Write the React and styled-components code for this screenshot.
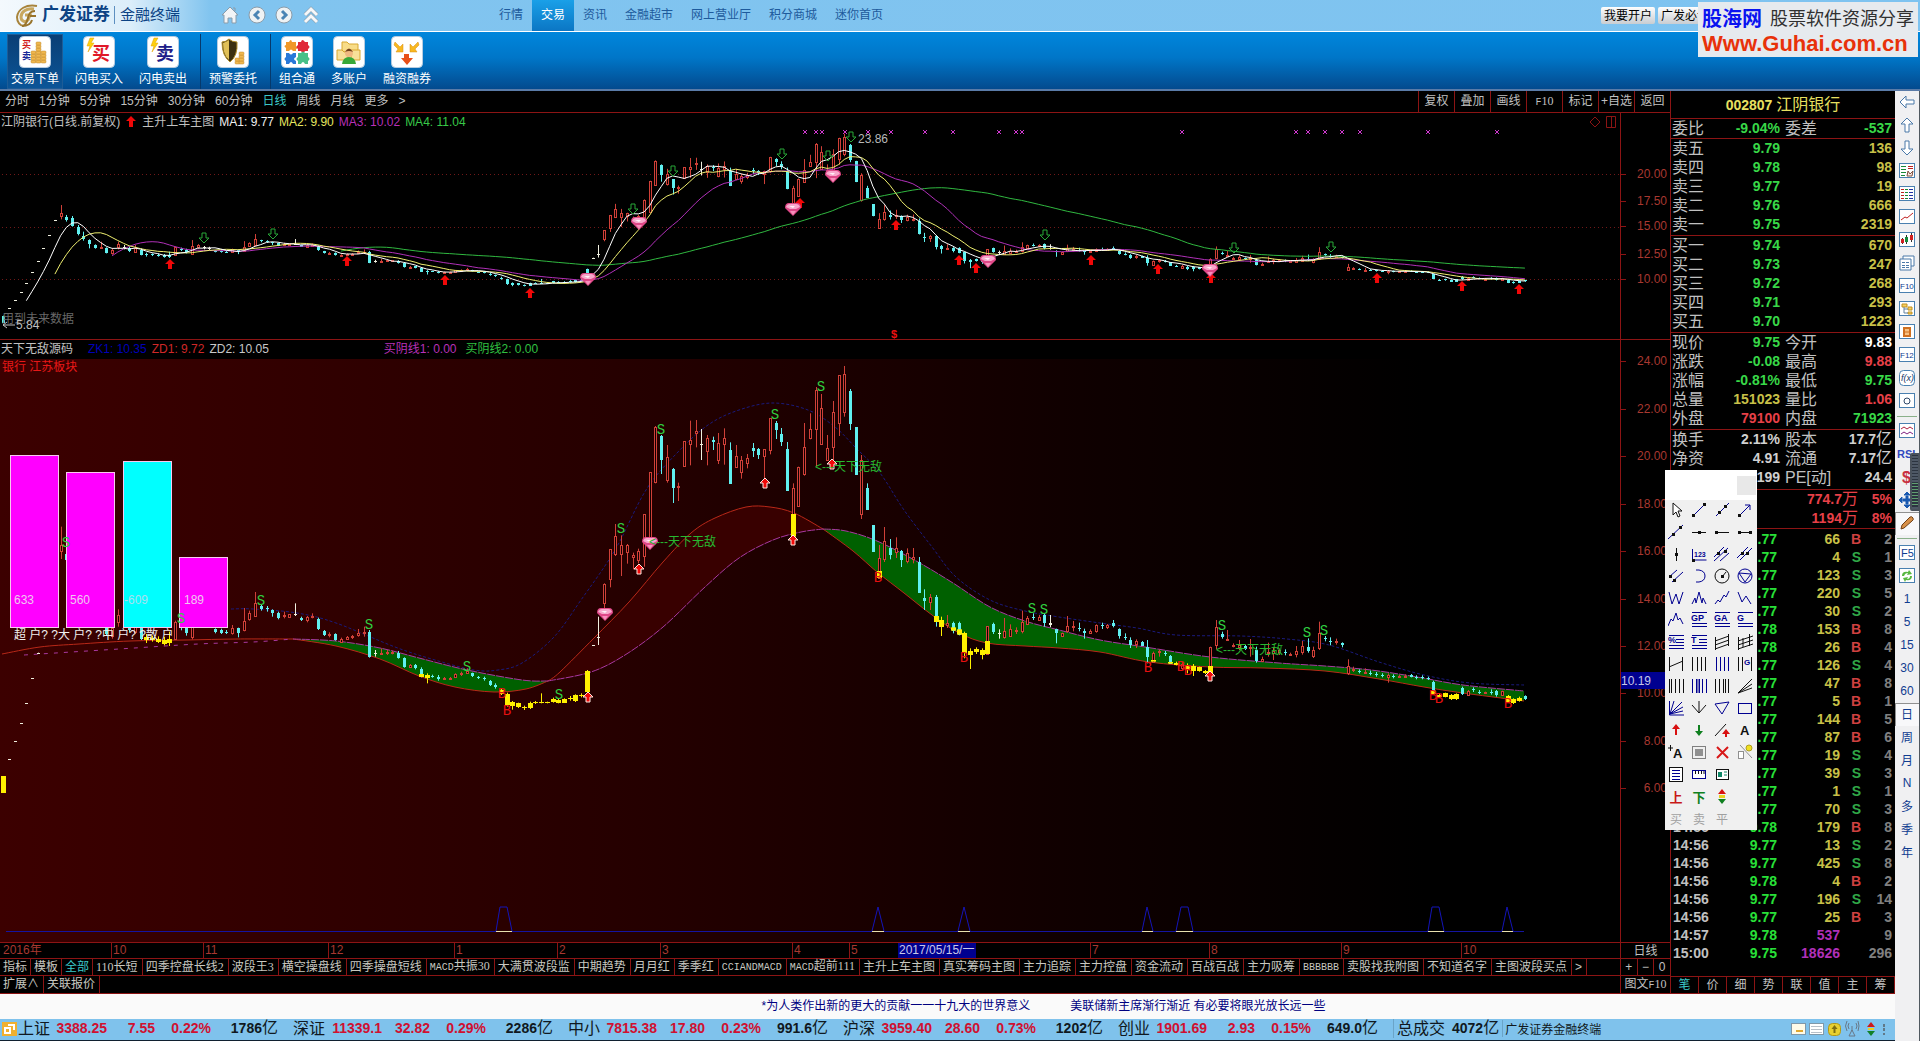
import { useState } from "react";
import styled, { createGlobalStyle, css } from "styled-components";

const GlobalStyle = createGlobalStyle`
  * {
    box-sizing: border-box;
  }
  body {
    margin: 0;
    background: #000;
    font-family: "Liberation Sans", "Noto Sans CJK SC", sans-serif;
    font-size: 12px;
    color: #c0c0c0;
  }
  button {
    font: inherit;
    color: inherit;
    background: none;
    border: 0;
    padding: 0;
    cursor: pointer;
  }
  a {
    color: inherit;
    text-decoration: none;
  }
  svg {
    display: block;
  }
`;

const RED = "#8c1414";
const GREEN = "#30d040";

const Page = styled.div`
  position: relative;
  min-height: 100vh;
  display: flex;
  flex-direction: column;
  overflow: hidden;
`;

/* ---------- title bar ---------- */

const TitleBar = styled.header`
  height: 32px;
  display: flex;
  align-items: center;
  background: linear-gradient(90deg, #f4f9fd 0, #dceefa 130px, #81c4ef 210px, #7ec3f0 100%);
  border-bottom: 1px solid #fff;
`;

const Brand = styled.div`
  width: 221px;
  display: flex;
  align-items: center;
  padding-left: 15px;
  color: #0c4384;
`;

const BrandName = styled.strong`
  font-size: 17px;
  line-height: 20px;
  padding: 0 4px 2px 3px;
`;

const BrandSub = styled.span`
  font-size: 15px;
  line-height: 18px;
  padding-left: 5px;
  margin-bottom: 2px;
  border-left: 1px solid #5d8fc0;
`;

const HistoryButtons = styled.div`
  width: 269px;
  display: flex;
  gap: 9px;
  padding-bottom: 2px;
`;

const Nav = styled.nav`
  display: flex;
  flex: 1;
  height: 31px;
`;

const NavLink = styled.a`
  padding: 0 9px;
  line-height: 31px;
  color: ${(p) => (p.$active ? "#fff" : "#1d5a9c")};
  background: ${(p) => (p.$active ? "linear-gradient(#1aa0e8, #0b76c4)" : "none")};
`;

const AccountButtons = styled.div`
  display: flex;
  gap: 3px;
  padding-right: 208px;
`;

const AccountButton = styled.button`
  height: 17px;
  padding: 0 3px;
  line-height: 16px;
  border-radius: 2px;
  color: #000;
  background: linear-gradient(#fdfdfd, #c9cdd2);
`;

const Watermark = styled.aside`
  position: absolute;
  top: 2px;
  right: 2px;
  width: 220px;
  height: 55px;
  padding: 4px;
  background: #e6eaee;
`;

const WatermarkTop = styled.div`
  display: flex;
  justify-content: space-between;
  align-items: center;
  line-height: 26px;
  strong {
    font-size: 20px;
    color: #0a14f0;
  }
  span {
    font-size: 18px;
    color: #303030;
  }
`;

const WatermarkUrl = styled.a`
  display: block;
  font-size: 22px;
  font-weight: bold;
  line-height: 24px;
  color: #e8320a;
`;

/* ---------- trade toolbar ---------- */

const TradeBar = styled.div`
  height: 59px;
  display: flex;
  padding: 2px 3px 0;
  background: linear-gradient(#0086dc 0, #0076c8 45%, #034a8e 100%);
  border-bottom: 2px solid #5a7ba8;
`;

const TradeGroup = styled.div`
  display: flex;
  gap: 8px;
  padding: 0 9px 0 4px;
  & + & {
    border-left: 1px solid #06396c;
  }
`;

const TradeButton = styled.button`
  display: flex;
  flex-direction: column;
  align-items: center;
  gap: 3px;
  padding: 2px 4px 0;
  line-height: 16px;
  color: #fff;
  ${(p) =>
    p.$active &&
    css`
      background: linear-gradient(#0a3e74, #0b5598);
      box-shadow: inset 0 0 0 1px #1e5c96;
    `}
`;

/* ---------- layout of the work area ---------- */

const Work = styled.div`
  display: flex;
  flex: 1;
`;

const Main = styled.main`
  flex: 1;
  min-width: 0;
  display: flex;
  flex-direction: column;
`;

const Desk = styled.div`
  display: flex;
`;

const Charts = styled.div`
  flex: 1;
  min-width: 0;
`;

const PeriodBar = styled.div`
  height: 22px;
  display: flex;
  justify-content: space-between;
  line-height: 20px;
  border-bottom: 1px solid ${RED};
`;

const Periods = styled.div`
  display: flex;
  align-items: flex-start;
  gap: 10px;
  padding-left: 5px;
`;

const Period = styled.button`
  line-height: 20px;
  color: ${(p) => (p.$active ? "#3cc8c8" : "#c0c0c0")};
`;

const ChartActions = styled.div`
  display: flex;
`;

const ChartAction = styled.button`
  width: 36px;
  padding-bottom: 1px;
  border-left: 1px solid ${RED};
`;

const Pane = styled.section`
  display: flex;
  border-bottom: 1px solid ${RED};
`;

const Plot = styled.div`
  flex: 1;
  min-width: 0;
`;

const Legend = styled.div`
  height: 18px;
  display: flex;
  align-items: center;
  gap: 5px;
  padding-left: 1px;
  line-height: 18px;
`;

const LegendValue = styled.span`
  color: ${(p) => p.$color};
  margin-left: ${(p) => p.$before || 0}px;
`;

const LegendEnd = styled.span`
  display: flex;
  gap: 4px;
  margin-left: auto;
  padding-right: 3px;
`;

const PlotSvg = styled.svg`
  width: 100%;
  height: ${(p) => p.$height}px;
  overflow: visible;
`;

const AxisSvg = styled.svg`
  width: 50px;
  flex: none;
  border-left: 1px solid ${RED};
`;

const FootRow = styled.div`
  display: flex;
  height: ${(p) => p.$height}px;
  border-bottom: 1px solid ${RED};
`;

const FootFill = styled.div`
  flex: 1;
  min-width: 0;
  display: flex;
`;

const FootEnd = styled.div`
  width: 50px;
  display: flex;
  flex: none;
  border-left: 1px solid ${RED};
  button {
    flex: 1;
    line-height: 14px;
  }
  button + button {
    border-left: 1px solid ${RED};
  }
`;

const Tab = styled.button`
  padding: 0 ${(p) => (p.$tight ? 3 : 4)}px 0 3px;
  line-height: 15px;
  white-space: nowrap;
  border-right: 1px solid ${RED};
  color: ${(p) => (p.$active ? "#3cc8c8" : "#c8c8c0")};
`;

const Letters = styled.span`
  font-family: "Liberation Mono", monospace;
  font-size: 10px;
`;

const Digits = styled.span`
  font-family: "Liberation Serif", serif;
`;

/* ---------- quote panel ---------- */

const Quote = styled.aside`
  width: 225px;
  display: flex;
  flex-direction: column;
  border-left: 1px solid ${RED};
`;

const QuoteTitle = styled.h1`
  margin: 0;
  height: 28px;
  font-size: 14px;
  line-height: 28px;
  text-align: center;
  color: #e8e060;
  border-bottom: 1px solid ${RED};
  span {
    font-size: 16px;
    font-weight: normal;
  }
`;

const QuoteBlock = styled.div`
  padding-bottom: ${(p) => p.$pad || 0}px;
  border-bottom: 1px solid ${RED};
`;

const QuoteTable = styled.table`
  width: 100%;
  table-layout: fixed;
  border-collapse: collapse;
  th,
  td {
    padding: 0;
    height: 19px;
    line-height: 19px;
    white-space: nowrap;
  }
  th {
    width: 38px;
    font-size: 16px;
    font-weight: normal;
    text-align: left;
    padding-left: 1px;
  }
  th + td {
    width: 71px;
  }
  th:nth-child(3) {
    width: 40px;
    padding-left: 5px;
  }
  td:last-child {
    width: auto;
    padding-right: 3px;
  }
`;

const Num = styled.td`
  font-size: 14px;
  font-weight: bold;
  text-align: right;
  color: ${(p) => p.$color || "#d0d0d0"};
  span {
    font-size: 16px;
    line-height: 0;
    font-weight: normal;
  }
`;

const FlowTable = styled.table`
  width: 100%;
  table-layout: fixed;
  border-collapse: collapse;
  td {
    padding: 0;
    height: 19px;
    line-height: 19px;
  }
  td:last-child {
    width: 37px;
    padding-right: 3px;
  }
`;

const Ticks = styled.table`
  width: 100%;
  margin-top: 1px;
  table-layout: fixed;
  border-collapse: collapse;
  font-size: 14px;
  font-weight: bold;
  td {
    padding: 0;
    height: 18px;
    line-height: 18px;
    text-align: right;
  }
`;

const TickTime = styled.td`
  && {
    width: 42px;
    padding-left: 2px;
    text-align: left;
  }
`;

const TickCell = styled.td`
  width: ${(p) => p.$width}px;
  color: ${(p) => p.$color};
`;

const TickCount = styled.td`
  && {
    padding-right: 3px;
    color: #808080;
  }
`;

const QuoteTabs = styled.div`
  display: flex;
  height: 18px;
  margin-top: auto;
  border: solid ${RED};
  border-width: 1px 0;
`;

const QuoteTab = styled.button`
  flex: 1;
  line-height: 15px;
  border-right: 1px solid ${RED};
  color: ${(p) => (p.$active ? "#3cc8c8" : "#c0c0c0")};
`;

/* ---------- news and status ---------- */

const News = styled.div`
  height: 25px;
  display: flex;
  justify-content: center;
  gap: 40px;
  padding-left: 192px;
  line-height: 24px;
  color: #000080;
  background: #fafafa;
`;

const Status = styled.footer`
  height: 22px;
  display: flex;
  align-items: center;
  padding: 0 0 2px 2px;
  color: #101820;
  background: #7fc2ec;
  border-bottom: 1px solid #102030;
`;

const Index = styled.div`
  display: grid;
  grid-template-columns: 35px 54px 48px 56px 67px;
  align-items: center;
  width: 275px;
  font-size: 14px;
  line-height: 19px;
  text-align: right;
`;

const IndexName = styled.span`
  font-size: 16px;
  text-align: left;
`;

const Up = styled.strong`
  color: #d01030;
`;

const Amount = styled.strong`
  span {
    font-size: 16px;
    font-weight: normal;
    line-height: 0;
  }
`;

const Turnover = styled.div`
  display: flex;
  align-items: center;
  gap: 7px;
  padding: 0 3px 0 3px;
  font-size: 14px;
  line-height: 19px;
  border-left: 1px solid #6aa4c8;
`;

const TerminalName = styled.span`
  padding-left: 2px;
  border-left: 1px solid #6aa4c8;
`;

const Tray = styled.div`
  display: flex;
  align-items: center;
  gap: 3px;
  margin-left: auto;
  padding-right: 8px;
`;

/* ---------- right strip ---------- */

const Strip = styled.nav`
  width: 25px;
  display: flex;
  flex-direction: column;
  align-items: center;
  background: #f0f0f2;
  border-right: 1px solid #505860;
`;

const StripButton = styled.button`
  width: 24px;
  height: 23px;
  display: flex;
  align-items: center;
  justify-content: center;
  flex: none;
  padding-bottom: 2px;
  font-size: 12px;
  color: #103c90;
  ${(p) =>
    p.$pressed &&
    css`
      background: #f8f8fa;
      box-shadow: inset 1px 1px 0 #909090;
    `}
`;

const StripRule = styled.hr`
  width: 20px;
  height: 1px;
  margin: 3px 0;
  border: 0;
  background: #8ab08a;
`;

const Meter = styled.div`
  position: absolute;
  top: 453px;
  right: 0;
  width: 10px;
  height: 58px;
  border-radius: 2px 0 0 2px;
  border: 2px solid #4a525c;
  background: repeating-linear-gradient(#2c3440 0 1px, #4e5866 1px 3px);
`;

const MeterLevel = styled.div`
  height: 24px;
  margin-top: 28px;
  background: repeating-linear-gradient(#60a070 0 1px, #2c3440 1px 3px);
`;

/* ---------- floating drawing tools ---------- */

const Palette = styled.section`
  position: absolute;
  top: 470px;
  right: 163px;
  width: 92px;
  background: #f0f0f0;
`;

const PaletteHead = styled.div`
  height: 30px;
  display: flex;
  justify-content: flex-end;
  align-items: center;
  padding-right: 1px;
  background: #fff;
`;

const PaletteClose = styled.button`
  width: 19px;
  height: 19px;
  background: #e8e8e8;
`;

const PaletteGrid = styled.div`
  display: grid;
  grid-template-columns: repeat(4, 23px);
  grid-auto-rows: 22px;
`;

const PaletteButton = styled.button`
  display: flex;
  align-items: center;
  justify-content: center;
  padding: 0 1px 2px 0;
  font-size: ${(p) => p.$size || 13}px;
  font-weight: ${(p) => (p.$size ? "normal" : "bold")};
  color: ${(p) => p.$color};
`;

/* ---------- price data ----------
   each bar: type, high, body top, body bottom, low[, start of the yellow part]
   measured in thirds of a pixel below `top` */

const STEP = 5.72;
const xOf = (n) => 604 + STEP * n;
const segments = [
  {
    from: -105,
    top: 350,
    bars: [
      ["y", 1278, 1278, 1328, 1328], ["w", 1228, 1228, 1229, 1229], ["w", 1174, 1174, 1175, 1175],
      ["w", 1120, 1120, 1121, 1121], ["w", 1059, 1059, 1060, 1060], ["w", 985, 985, 986, 986],
      ["w", 908, 908, 909, 909], ["w", 823, 823, 824, 824], ["w", 735, 735, 736, 736],
      ["w", 631, 631, 632, 632], ["r", 530, 586, 604, 627], ["c", 597, 613, 631, 642],
      ["c", 604, 620, 672, 676], ["c", 665, 681, 726, 735], ["c", 710, 739, 762, 771],
      ["c", 762, 769, 796, 823], ["c", 796, 802, 818, 825], ["r", 778, 816, 823, 827],
      ["c", 816, 823, 852, 857], ["r", 823, 834, 857, 866], ["r", 778, 794, 816, 830],
      ["w", 800, 812, 818, 830], ["c", 812, 820, 841, 848], ["r", 800, 823, 846, 852],
      ["c", 823, 834, 866, 870], ["y", 852, 861, 870, 879], ["y", 857, 863, 870, 875],
      ["y", 859, 866, 875, 879], ["y", 861, 870, 882, 886], ["y", 845, 868, 879, 888],
      ["r", 812, 816, 866, 870], ["c", 818, 825, 834, 841], ["c", 825, 834, 848, 857],
      ["r", 767, 807, 861, 868], ["r", 794, 802, 816, 825], ["w", 807, 816, 823, 830],
      ["w", 812, 818, 827, 834],
    ],
  },
  {
    from: -68,
    top: 440,
    bars: [
      ["c", 565, 568, 575, 580], ["c", 566, 570, 578, 582], ["c", 570, 575, 578, 582],
      ["r", 555, 563, 580, 584], ["c", 563, 565, 580, 592], ["r", 504, 542, 570, 574],
      ["r", 512, 519, 536, 542], ["r", 456, 490, 528, 530], ["c", 495, 498, 506, 512],
      ["c", 498, 505, 507, 515], ["c", 508, 511, 520, 530], ["c", 515, 518, 534, 538],
      ["r", 515, 524, 528, 535], ["r", 522, 522, 532, 533], ["w", 490, 521, 524, 528],
      ["c", 530, 533, 541, 543], ["r", 528, 532, 541, 547], ["r", 520, 529, 532, 535],
      ["c", 533, 536, 566, 570], ["c", 570, 574, 586, 588], ["r", 577, 581, 586, 592],
      ["c", 580, 583, 600, 602], ["r", 593, 597, 605, 608], ["r", 588, 591, 597, 600],
      ["r", 585, 588, 592, 597], ["r", 567, 580, 584, 590], ["r", 560, 575, 580, 590],
      ["c", 570, 577, 650, 653], ["w", 630, 638, 641, 650], ["r", 625, 638, 641, 645],
      ["r", 630, 635, 640, 645], ["r", 632, 635, 640, 643], ["c", 633, 639, 653, 656],
      ["c", 652, 654, 680, 683], ["r", 672, 676, 680, 684], ["c", 672, 675, 684, 688],
      ["c", 682, 686, 711, 712, 702], ["y", 700, 705, 715, 730], ["c", 704, 708, 711, 713],
      ["c", 705, 712, 716, 722], ["r", 711, 715, 718, 720], ["r", 711, 715, 718, 720],
      ["r", 700, 702, 712, 714], ["r", 695, 699, 703, 708], ["r", 685, 694, 698, 700],
      ["c", 698, 700, 709, 711], ["c", 708, 711, 714, 717], ["c", 710, 714, 717, 722],
      ["c", 720, 723, 734, 738], ["c", 730, 736, 742, 746], ["y", 745, 750, 762, 765],
      ["y", 758, 762, 795, 800], ["y", 783, 787, 799, 809], ["y", 788, 790, 802, 804],
      ["y", 797, 802, 804, 810], ["y", 785, 789, 805, 807], ["y", 783, 786, 789, 792],
      ["y", 760, 786, 789, 790], ["y", 785, 787, 789, 790], ["y", 773, 777, 786, 788],
      ["y", 775, 780, 788, 790], ["y", 775, 778, 788, 789], ["y", 768, 775, 778, 782],
      ["y", 763, 766, 782, 786], ["y", 760, 766, 769, 772], ["y", 690, 693, 757, 760],
      ["w", 615, 616, 617, 617], ["w", 530, 592, 594, 615],
    ],
  },
  {
    from: 0,
    top: 350,
    bars: [
      ["r", 700, 702, 758, 775], ["r", 597, 598, 686, 712], ["r", 522, 558, 613, 618],
      ["r", 556, 585, 612, 678], ["r", 582, 586, 607, 641], ["r", 608, 616, 620, 658],
      ["r", 596, 604, 630, 640], ["r", 492, 493, 617, 650], ["r", 366, 367, 575, 580],
      ["r", 228, 232, 395, 400], ["c", 255, 258, 330, 372], ["r", 285, 322, 391, 398],
      ["c", 354, 357, 414, 459], ["r", 398, 408, 410, 453], ["r", 273, 274, 347, 348],
      ["r", 212, 270, 283, 346], ["r", 210, 243, 248, 292], ["w", 237, 283, 285, 330],
      ["r", 255, 265, 304, 346], ["c", 260, 271, 275, 300], ["r", 249, 280, 331, 342],
      ["r", 235, 265, 283, 344], ["c", 277, 300, 402, 402], ["r", 285, 319, 352, 353],
      ["r", 318, 331, 366, 386], ["r", 312, 325, 338, 355], ["c", 279, 294, 303, 321],
      ["c", 294, 297, 315, 327], ["r", 297, 298, 317, 388], ["r", 204, 205, 299, 313],
      ["c", 213, 219, 240, 267], ["c", 234, 252, 276, 288], ["c", 276, 297, 422, 423],
      ["r", 400, 415, 560, 560, 492], ["r", 350, 352, 467, 468], ["r", 219, 290, 372, 377],
      ["r", 190, 238, 265, 268], ["r", 111, 119, 238, 348], ["r", 132, 174, 283, 285],
      ["r", 255, 294, 329, 330], ["r", 153, 186, 290, 330], ["r", 75, 76, 219, 258],
      ["r", 48, 73, 187, 200], ["c", 117, 123, 223, 240], ["c", 231, 232, 374, 375],
      ["r", 315, 330, 493, 507], ["c", 400, 414, 480, 480], ["c", 525, 525, 605, 606],
      ["r", 585, 625, 684, 684, 663], ["r", 531, 574, 627, 636], ["c", 567, 595, 614, 628],
      ["r", 562, 594, 607, 624], ["c", 600, 602, 630, 651], ["r", 595, 609, 634, 640],
      ["r", 594, 622, 626, 640], ["c", 621, 636, 728, 729], ["c", 718, 744, 752, 780],
      ["r", 732, 741, 756, 780], ["c", 735, 741, 816, 830, 798], ["y", 800, 810, 830, 858],
      ["r", 795, 820, 824, 834], ["c", 815, 819, 842, 850, 832], ["c", 815, 820, 854, 856, 838],
      ["y", 845, 850, 910, 925], ["y", 895, 904, 916, 957], ["y", 892, 898, 906, 912],
      ["y", 895, 900, 914, 928], ["r", 828, 829, 912, 912, 873], ["c", 818, 822, 846, 852],
      ["w", 838, 850, 853, 866], ["r", 804, 844, 862, 866], ["r", 823, 838, 857, 860],
      ["r", 832, 840, 844, 852], ["r", 782, 815, 842, 850], ["r", 798, 803, 822, 824],
      ["c", 790, 801, 804, 810], ["r", 795, 802, 810, 812], ["c", 790, 795, 818, 830],
      ["w", 795, 820, 826, 832], ["c", 836, 838, 848, 880], ["r", 848, 850, 859, 860],
      ["r", 798, 828, 844, 848], ["r", 813, 829, 832, 844], ["c", 818, 834, 838, 844],
      ["c", 836, 844, 848, 866], ["r", 838, 842, 850, 852], ["r", 823, 826, 844, 848],
    ],
  },
  {
    from: 87,
    top: 560,
    bars: [
      ["c", 188, 196, 199, 207], ["r", 192, 196, 202, 207], ["c", 180, 189, 198, 202],
      ["c", 205, 208, 228, 236], ["c", 220, 232, 235, 240], ["c", 232, 240, 256, 264],
      ["r", 238, 243, 252, 264], ["c", 243, 245, 257, 258], ["c", 240, 260, 292, 310],
      ["r", 275, 280, 305, 305, 300], ["r", 268, 274, 277, 290], ["c", 272, 279, 282, 288],
      ["c", 285, 288, 311, 312, 306], ["y", 305, 309, 314, 316], ["r", 305, 312, 325, 330],
      ["y", 310, 318, 330, 340], ["y", 312, 318, 334, 348], ["y", 320, 322, 333, 335],
      ["y", 330, 334, 340, 342], ["r", 260, 262, 340, 342, 318], ["r", 180, 200, 255, 268],
      ["c", 215, 222, 230, 236], ["r", 210, 236, 240, 242], ["r", 250, 255, 259, 262],
      ["r", 240, 254, 262, 270], ["c", 255, 258, 268, 270], ["r", 237, 260, 264, 290],
      ["c", 260, 270, 303, 308], ["r", 290, 296, 302, 305], ["r", 248, 276, 280, 290],
      ["r", 262, 272, 278, 300], ["r", 265, 270, 275, 285], ["c", 268, 275, 279, 286],
      ["r", 278, 281, 285, 288], ["r", 258, 272, 282, 292], ["r", 243, 258, 276, 284],
      ["c", 235, 262, 274, 278], ["r", 260, 270, 288, 294], ["r", 185, 220, 265, 270],
      ["c", 228, 234, 238, 244], ["c", 232, 243, 247, 256], ["r", 236, 242, 247, 254],
      ["c", 247, 250, 255, 262], ["r", 298, 318, 338, 345], ["r", 320, 326, 330, 336],
      ["c", 328, 332, 336, 340], ["r", 325, 336, 339, 342], ["c", 332, 338, 342, 346],
      ["c", 336, 342, 346, 350], ["c", 340, 345, 349, 352], ["r", 340, 345, 350, 368],
      ["c", 343, 348, 352, 355], ["r", 345, 348, 351, 352], ["r", 343, 347, 351, 353],
      ["c", 342, 346, 350, 352], ["c", 346, 350, 355, 358], ["c", 346, 352, 355, 358],
      ["c", 350, 354, 358, 360], ["c", 362, 366, 402, 402, 392], ["y", 400, 404, 410, 412],
      ["y", 398, 400, 410, 412], ["y", 402, 405, 418, 420], ["y", 400, 403, 418, 420],
      ["c", 380, 384, 402, 405], ["r", 390, 392, 406, 408], ["c", 382, 388, 391, 396],
      ["c", 390, 395, 399, 402], ["r", 395, 397, 399, 402], ["c", 388, 395, 398, 404],
      ["c", 390, 393, 404, 410], ["r", 392, 394, 405, 406], ["y", 405, 408, 426, 428],
      ["y", 415, 418, 430, 432], ["y", 410, 414, 424, 425], ["c", 406, 409, 416, 420],
    ],
  },
];

const bars = segments.flatMap(({ from, top, bars: rows }) =>
  rows.map(([type, ...v], i) => {
    const [high, open, close, low, split] = v.map((n) => top + n / 3);
    return { type, x: xOf(from + i), high, open, close, low, split };
  })
);

const toUpper = (y) => 132 + (y - 362) * 0.4436;

const closeOf = (b) =>
  b.type === "r" ? b.open : b.type === "c" ? b.close : (b.open + b.close) / 2;

function averagePath(days) {
  let d = "";
  for (let i = days - 1; i < bars.length; i++) {
    let sum = 0;
    for (let k = 0; k < days; k++) sum += closeOf(bars[i - k]);
    d += `${d ? "L" : "M"}${bars[i].x.toFixed(1)} ${toUpper(sum / days).toFixed(1)}`;
  }
  return d;
}

function smooth(pts, start = "M") {
  let d = `${start}${pts[0][0]} ${pts[0][1]}`;
  for (let i = 0; i < pts.length - 1; i++) {
    const p0 = pts[i - 1] || pts[i];
    const p1 = pts[i];
    const p2 = pts[i + 1];
    const p3 = pts[i + 2] || p2;
    d += `C${p1[0] + (p2[0] - p0[0]) / 6} ${p1[1] + (p2[1] - p0[1]) / 6} ${p2[0] - (p3[0] - p1[0]) / 6} ${
      p2[1] - (p3[1] - p1[1]) / 6
    } ${p2[0]} ${p2[1]}`;
  }
  return d;
}

const band = (a, b) => smooth(a) + smooth([...b].reverse(), "L") + "Z";

// fast and slow lines, cut where they cross
const fast = [
  [[2, 654], [40, 647], [79, 644], [130, 641], [186, 640], [237, 639], [293, 639]],
  [[293, 639], [336, 646], [380, 659], [419, 676], [455, 687], [494, 692], [526, 689], [548, 681]],
  [[548, 681], [560, 672], [594, 638], [629, 602], [663, 562], [691, 533], [715, 518], [746, 507], [770, 507], [794, 513], [823, 529]],
  [[823, 529], [853, 551], [877, 572], [904, 593], [932, 615], [959, 633], [987, 643], [1025, 646], [1059, 648], [1100, 652], [1149, 662], [1210, 667], [1264, 668], [1325, 671], [1379, 679], [1424, 687], [1463, 693], [1524, 701]],
];
const slow = [
  [[24, 655], [119, 649], [198, 644], [253, 642], [293, 639]],
  [[293, 639], [336, 641], [380, 648], [419, 658], [467, 670], [522, 680], [548, 681]],
  [[548, 681], [591, 672], [625, 655], [663, 627], [705, 587], [739, 558], [773, 540], [801, 532], [823, 529]],
  [[823, 529], [846, 531], [877, 541], [918, 562], [953, 583], [990, 607], [1025, 621], [1059, 630], [1100, 640], [1145, 647], [1210, 657], [1279, 663], [1325, 666], [1371, 670], [1417, 677], [1463, 685], [1524, 691]],
];
const outer = [
  [231, 609], [253, 609], [297, 613], [336, 623], [395, 647], [435, 660], [474, 670], [498, 670],
  [522, 663], [554, 637], [581, 600], [615, 550], [646, 490], [677, 453], [708, 425], [739, 410],
  [773, 403], [808, 410], [835, 427], [856, 448], [880, 473], [904, 510], [932, 547], [956, 577],
  [990, 600], [1025, 611], [1059, 617], [1100, 623], [1137, 628], [1176, 635], [1241, 636],
  [1287, 639], [1329, 645], [1379, 662], [1424, 675], [1470, 683], [1524, 685],
];

const barColors = { r: "#d04038", c: "#60f0f0", w: "#f0f0e0", y: "#fff000" };

function Candles({ map, width, markYellow }) {
  return bars.map((b, i) => {
    const color = !markYellow && b.type === "y" ? barColors.c : barColors[b.type];
    const x = Math.round(b.x) + 0.5;
    const bodyTop = Math.round(map(b.open));
    const height = Math.max(1, Math.round(map(b.close)) - bodyTop);
    const solid = b.type === "y" && markYellow ? 5 : width + 1;
    return (
      <g key={i}>
        <line x1={x} x2={x} y1={map(b.high)} y2={b.type === "r" ? bodyTop : map(b.low)} stroke={color} />
        {b.type === "r" && <line x1={x} x2={x} y1={map(b.close)} y2={map(b.low)} stroke={color} />}
        {b.type === "r" ? (
          <rect x={x - 1} y={bodyTop + 0.5} width="2" height={height} fill="#100000" stroke={color} />
        ) : (
          <rect x={x - solid / 2} y={bodyTop} width={solid} height={height} fill={color} />
        )}
        {markYellow && b.split && (
          <rect x={x - 2.5} y={b.split} width="5" height={b.close - b.split} fill={barColors.y} />
        )}
      </g>
    );
  });
}

function UpArrow({ x, y, outline }) {
  return (
    <path
      d={`M${x} ${y - 5}l5 5h-3v5h-4v-5h-3z`}
      fill="#f00808"
      stroke={outline ? "#ffe8e0" : "none"}
    />
  );
}

function DownArrow({ x, y }) {
  return <path d={`M${x} ${y + 5}l-5 -5h3v-5h4v5h3z`} fill="none" stroke="#28a838" />;
}

function Gem({ x, y }) {
  return (
    <g>
      <path d={`M${x - 8} ${y - 1}q0 -5 4 -5h8q4 0 4 5l-8 8z`} fill="#e04888" />
      <path d={`M${x - 7} ${y - 2}q1 -3 4 -3h6q3 0 4 3l-4 2h-6z`} fill="#f8a8cc" />
      <path d={`M${x - 4} ${y - 3}h6l-2 2z`} fill="#fff0f6" />
      <path d={`M${x - 3} ${y + 2}h6l-3 4z`} fill="#f890bc" />
    </g>
  );
}

const upperDown = [[204, 238], [273, 234], [633, 209], [673, 171], [782, 154], [828, 156], [851, 137], [1045, 235], [1234, 248], [1331, 247]];
const upperUp = [[170, 264], [347, 261], [445, 280], [530, 293], [800, 203], [896, 225], [959, 260], [976, 268], [1091, 260], [1158, 269], [1211, 278], [1377, 278], [1462, 286], [1519, 289]];
const upperGems = [[588, 279], [639, 223], [793, 209], [833, 176], [988, 261], [1210, 270]];
const crosses = [805, 816, 822, 845, 868, 891, 925, 953, 999, 1016, 1022, 1182, 1296, 1308, 1325, 1342, 1360, 1428, 1497];

function UpperPlot() {
  return (
    <PlotSvg $height={208} viewBox="0 131 1620 208" preserveAspectRatio="xMinYMin meet" fontSize="12">
      {[174, 227, 279].map((y) => (
        <path key={y} d={`M2 ${y}.5H1620`} stroke="#701818" strokeDasharray="1 3" />
      ))}
      <Candles map={toUpper} width={2} />
      <g fill="none" strokeWidth="1">
        <path d={averagePath(60)} stroke="#30b840" />
        <path d={averagePath(20)} stroke="#b030b8" />
        <path d={averagePath(10)} stroke="#f0f070" />
        <path d={averagePath(5)} stroke="#fff" />
      </g>
      {upperDown.map(([x, y]) => <DownArrow key={x} x={x} y={y} />)}
      {upperUp.map(([x, y]) => <UpArrow key={x} x={x} y={y} />)}
      {upperGems.map(([x, y]) => <Gem key={x} x={x} y={y} />)}
      {crosses.map((x) => (
        <path key={x} d={`M${x - 2} 130l4 4m0 -4l-4 4`} stroke="#d038d0" />
      ))}
      <text x="858" y="143" fill="#b8b8b8">23.86</text>
      <text x="2" y="323" fill="#686868">用到未来数据</text>
      <path d="M15 325H3m4 -3l-4 3l4 3" fill="none" stroke="#c0c0c0" />
      <text x="16" y="329" fill="#c0c0c0">5.84</text>
      <text x="891" y="338" fill="#f01010" fontSize="11" fontWeight="bold">$</text>
    </PlotSvg>
  );
}

const flows = [
  { x: 10, y: 455, value: "633", label: 14 },
  { x: 66, y: 472, value: "560", label: 70 },
  { x: 123, y: 461, value: "-609", label: 124, out: true },
  { x: 179, y: 557, value: "189", label: 184 },
];
const sells = [[66, 543], [181, 619], [261, 601], [369, 625], [467, 667], [559, 695], [621, 529], [661, 430], [775, 415], [821, 387], [1032, 609], [1044, 610], [1222, 626], [1307, 633], [1324, 631]];
const buys = [[502, 694], [507, 711], [878, 578], [964, 658], [1148, 668], [1181, 667], [1188, 671], [1433, 696], [1439, 699], [1508, 704]];
const lowerUp = [[588, 697], [639, 569], [765, 483], [793, 540], [832, 464], [1210, 676]];
const hits = [[649, 546], [815, 471], [1216, 654]];
const peaks = [[496, 500, 507, 512], [872, 878, 878, 884], [958, 964, 964, 970], [1142, 1147, 1147, 1153], [1176, 1181, 1188, 1193], [1428, 1432, 1439, 1444], [1502, 1507, 1507, 1513]];

function LowerPlot() {
  return (
    <PlotSvg $height={584} viewBox="0 358 1620 584" preserveAspectRatio="xMinYMin meet" fontSize="12">
      <defs>
        <linearGradient id="dusk">
          <stop offset="0" stopColor="#3c0000" />
          <stop offset=".38" stopColor="#260000" />
          <stop offset=".68" stopColor="#0e0000" />
          <stop offset=".88" stopColor="#000" />
        </linearGradient>
      </defs>
      <rect x="0" y="359" width="1620" height="583" fill="url(#dusk)" />
      <text x="2" y="371" fill="#e81818">银行 江苏板块</text>
      <path d={smooth(outer)} fill="none" stroke="#1a1a7c" strokeDasharray="3 2" />
      <path d={band(slow[1], fast[1])} fill="#006000" />
      <path d={band(slow[2], fast[2])} fill="#380000" />
      <path d={band(slow[3], fast[3])} fill="#006000" />
      {fast.map((f, i) => (
        <path key={i} d={smooth(f)} fill="none" stroke="#b82818" />
      ))}
      {slow.map((s, i) => (
        <path key={i} d={smooth(s)} fill="none" stroke="#a838a0" strokeDasharray={i ? "8 1" : "4 6"} />
      ))}
      <Candles map={(y) => y} width={2} markYellow />
      {flows.map((f) => (
        <g key={f.value}>
          <rect
            x={f.x + 0.5}
            y={f.y + 0.5}
            width="48"
            height={627 - f.y}
            fill={f.out ? "#00ffff" : "#ff00ff"}
            stroke="#f8c8f0"
          />
          <text x={f.label} y="604" fill={f.out ? "#a8e0f0" : "#f0c8f0"}>{f.value}</text>
        </g>
      ))}
      <text x="14" y="639" fill="#f0f0f0">超 户? ?大 户? ?中 户? ?散 户</text>
      <g fontFamily="Liberation Mono, monospace" fontSize="14" textAnchor="middle">
        {sells.map(([x, y]) => (
          <text key={x} x={x} y={y + 4} fill={GREEN}>S</text>
        ))}
        {buys.map(([x, y]) => (
          <text key={x} x={x} y={y + 4} fill="#e81010">B</text>
        ))}
      </g>
      {lowerUp.map(([x, y]) => <UpArrow key={x} x={x} y={y} outline />)}
      <Gem x={605} y={614} />
      <Gem x={650} y={543} />
      {hits.map(([x, y]) => (
        <text key={x} x={x} y={y} fill="#28b830">{"<---天下无敌"}</text>
      ))}
      <path d="M6 931.5H1524" stroke="#1414a0" />
      {peaks.map(([a, b, c, d]) => (
        <g key={a} fill="none">
          <path d={`M${a} 931L${b} 907H${c}L${d} 931`} stroke="#1414b8" />
          <path d={`M${a} 931.5H${d}`} stroke="#e8e0b0" />
        </g>
      ))}
    </PlotSvg>
  );
}

const upperScale = [["20.00", 174], ["17.50", 201], ["15.00", 226], ["12.50", 254], ["10.00", 279]];
const lowerScale = [["24.00", 361], ["22.00", 409], ["20.00", 456], ["18.00", 504], ["16.00", 551], ["14.00", 599], ["12.00", 646], ["10.00", 693], ["8.00", 741], ["6.00", 788]];

function Axis({ top, height, scale, children }) {
  return (
    <AxisSvg height={height} viewBox={`1621 ${top} 49 ${height}`} fontSize="12">
      {scale.map(([label, y]) => (
        <g key={label}>
          <path d={`M1621 ${y}.5h5`} stroke={RED} />
          <text x="1667" y={y + 4} textAnchor="end" fill="#a83830">{label}</text>
        </g>
      ))}
      {children}
    </AxisSvg>
  );
}

const months = [[111, "10"], [203, "11"], [328, "12"], [454, "1"], [557, "2"], [660, "3"], [792, "4"], [849, "5"], [1090, "7"], [1209, "8"], [1341, "9"], [1461, "10"]];

function DateAxis() {
  return (
    <PlotSvg $height={15} viewBox="0 943 1620 15" preserveAspectRatio="xMinYMin meet" fontSize="12">
      <text x="3" y="954" fill="#a83830">2016年</text>
      {months.map(([x, label]) => (
        <g key={x}>
          <path d={`M${x}.5 943v15`} stroke={RED} />
          <text x={x + 2} y="954" fill="#a83830">{label}</text>
        </g>
      ))}
      <rect x="898" y="943" width="78" height="15" fill="#000090" />
      <text x="899" y="954" fill="#c8c8e8">2017/05/15/一</text>
    </PlotSvg>
  );
}

/* ---------- icons ---------- */

function BrandMark() {
  return (
    <svg width="24" height="24" viewBox="0 0 24 24" fill="none">
      <path d="M22 2C11 0 3 5 2 13c0 5 3 9 7 9" stroke="#a8843c" strokeWidth="2" />
      <path d="M19 5c-8-1-13 3-13 8 0 4 4 6 7 3l2-5h-5" stroke="#c8a860" strokeWidth="3" />
      <path d="M20 7c-5 0-6 3-7 7s-3 8-6 8c5 0 9-2 10-6M15 12h6" stroke="#98742c" strokeWidth="2" />
    </svg>
  );
}

const historyIcons = {
  主页: (
    <>
      <path d="M9 1l8 8h-2v8h-4v-5H7v5H3V9H1z" fill="#f2f4f6" stroke="#8a9caa" />
      <path d="M12 2h2v3" fill="none" stroke="#8a9caa" />
    </>
  ),
  后退: (
    <>
      <circle cx="9" cy="9" r="8" fill="#eef2f4" stroke="#8a9caa" />
      <path d="M11 5L7 9l4 4" fill="none" stroke="#4a84b4" strokeWidth="3" />
    </>
  ),
  前进: (
    <>
      <circle cx="9" cy="9" r="8" fill="#eef2f4" stroke="#8a9caa" />
      <path d="M7 5l4 4l-4 4" fill="none" stroke="#4a84b4" strokeWidth="3" />
    </>
  ),
  收起: (
    <>
      <path d="M3 9l6-6l6 6M3 16l6-6l6 6" fill="none" stroke="#8a9caa" strokeWidth="4" />
      <path d="M3 9l6-6l6 6M3 16l6-6l6 6" fill="none" stroke="#f6f8fa" strokeWidth="3" />
    </>
  ),
};

const coins = (x, y, n) =>
  Array.from({ length: n }, (_, i) => (
    <rect key={i} x={x} y={y - i * 3} width="5" height="3" rx="1" fill="#f0b850" stroke="#c08828" strokeWidth=".5" />
  ));

const tradeIcons = {
  order: (
    <>
      <text x="3" y="12" fontSize="9" fontWeight="bold" fill="#d01818">买</text>
      <text x="3" y="23" fontSize="9" fontWeight="bold" fill="#182898">卖</text>
      {coins(12, 24, 4)}
      {coins(17, 24, 7)}
      {coins(22, 24, 4)}
    </>
  ),
  buy: (
    <>
      <path d="M7 2L4 10h3l-2 6 6-9H8l3-5z" fill="#ffd010" stroke="#e0a000" strokeWidth=".5" />
      <text x="9" y="24" fontSize="18" fontWeight="bold" fill="#e01828">买</text>
    </>
  ),
  sell: (
    <>
      <path d="M7 2L4 10h3l-2 6 6-9H8l3-5z" fill="#ffd010" stroke="#e0a000" strokeWidth=".5" />
      <text x="9" y="24" fontSize="18" fontWeight="bold" fill="#201c88">卖</text>
    </>
  ),
  alert: (
    <>
      <path d="M5 6q4 0 7-3q3 3 8 3q1 14-7 20Q5 20 5 6z" fill="#3c3010" stroke="#b08c28" strokeWidth="1" />
      <path d="M12 4q-3 2-6 3q0 12 6 17z" fill="#e0c058" />
      {coins(18, 25, 2)}
      {coins(22, 25, 4)}
    </>
  ),
  combo: (
    <>
      <path d="M5 6h3q2-4 3 0h4v4q3 2 0 3v2h-3q-2-3-4 0H5v-3q-3-2 0-3z" fill="#f09828" />
      <path d="M17 6h3q1-4 4 0h3v3q3 2 0 4v2h-3q-2 4-4 0h-3v-2q-3-2 0-4z" fill="#e02838" />
      <path d="M5 17h3q2 3 4 0h3v4q-4 2 0 4v3h-3q-2-4-4 0H5v-3q-3-2 0-4z" fill="#2878d8" />
      <path d="M17 17h3q2-3 4 0h3v4q3 2 0 4v3h-3q-2-4-4 0h-3v-3q-3-2 0-4z" fill="#48c088" />
    </>
  ),
  accounts: (
    <>
      <path d="M9 6h5l2 2h9v8H9z" fill="#f8dc88" stroke="#d8a830" />
      <path d="M4 14h5l2 2h4v8H4zM18 14h9v10h-9z" fill="#f8e098" stroke="#d8a830" />
      <circle cx="16" cy="17" r="4" fill="#f0b880" />
      <path d="M12 16q4-7 8 0q-4-2-8 0z" fill="#704018" />
      <path d="M9 28q1-7 7-7t7 7z" fill="#38a838" />
    </>
  ),
  margin: (
    <>
      <path d="M4 6l5 5l3-3v8H5l2-3l-4-4zM27 6l-5 5l-3-3v8h7l-2-3l4-4z" fill="#f8b820" stroke="#d88c10" strokeWidth=".5" />
      <path d="M13 18h5v4h4l-6 7l-6-7h3z" fill="#e85018" />
    </>
  ),
};

function TradeIcon({ name }) {
  return (
    <svg width="32" height="32" viewBox="0 0 32 32">
      <rect x="0.5" y="0.5" width="31" height="31" rx="4" fill="#fff" stroke="#b8cce0" />
      {tradeIcons[name]}
    </svg>
  );
}

function Box({ children }) {
  return (
    <>
      <rect x="0.5" y="0.5" width="15" height="14" fill="#fff" stroke="#4a80b0" />
      {children}
    </>
  );
}

const outline = { fill: "#fff", stroke: "#4a78a8" };
const stripIcons = [
  <path d="M1 8l6-6v4h8v4H7v4z" {...outline} />,
  <path d="M8 1l6 6h-4v8H6V7H2z" {...outline} />,
  <path d="M8 15l6-6h-4V1H6v8H2z" {...outline} />,
  <Box>
    <path d="M2 3.5h5M2 6.5h5M2 9.5h5M2 12.5h4" stroke="#188838" />
    <path d="M9 3.5h5M9 5.5h5" stroke="#c02020" />
    <path d="M8 13l1-5l2 3l3-3l-1 5z" fill="#f8e8e0" stroke="#805040" />
  </Box>,
  <Box>
    <path d="M2 3.5h3M2 6.5h3M2 9.5h3M2 12.5h3" stroke="#c02020" />
    <path d="M6 3.5h3M6 6.5h3M6 9.5h3M6 12.5h3" stroke="#188838" />
    <path d="M10 3.5h4M10 6.5h4M10 9.5h4M10 12.5h4" stroke="#2030a0" />
  </Box>,
  <Box>
    <path d="M2 11l4-3l2 1l6-5" fill="none" stroke="#c02020" />
  </Box>,
  <Box>
    <path d="M3.5 6v6M7.5 3v9M12.5 1v9" stroke="#303030" />
    <path d="M2 7h3v4H2zM11 3h3v5h-3z" fill="#d02020" />
    <path d="M6 5h3v5H6z" fill="#188838" />
  </Box>,
  <>
    <path d="M4 1h11v10H4z" {...outline} />
    <path d="M1 4h11v11H1z" {...outline} />
    <path d="M3 7.5h3M3 10.5h3M3 12.5h3M7 7.5h3M7 10.5h3M7 12.5h3" stroke="#4a78a8" />
  </>,
  <Box><text x="1" y="11" fontSize="8" fill="#103c90">F10</text></Box>,
  <Box>
    <path d="M3 3h5v3H3zM9 6h4v3H9zM9 11h4v2H9z" fill="#f8d060" stroke="#c09020" />
    <path d="M5 6v6h4M5 8h4" fill="none" stroke="#6080a0" />
  </Box>,
  <Box>
    <path d="M5 4h6v8H5z" fill="#f8c080" stroke="#d07020" strokeWidth="2" />
    <path d="M5 8h6" stroke="#d07020" />
  </Box>,
  <Box><text x="1" y="11" fontSize="8" fill="#103c90">F12</text></Box>,
  <>
    <rect x="0.5" y="0.5" width="15" height="15" rx="4" fill="#fff" stroke="#4a80b0" />
    <text x="2" y="11" fontSize="9" fontStyle="italic" fill="#203868">f(x)</text>
  </>,
  <Box><circle cx="8" cy="8" r="3" fill="none" stroke="#304868" /></Box>,
  null,
  <Box>
    <path d="M2 6l3-2l3 2l3-2l3 2" fill="none" stroke="#b02040" />
    <path d="M2 11l3-2l3 2l3-2l3 2" fill="none" stroke="#802080" />
  </Box>,
  <text x="-2" y="12" fontSize="11" fontWeight="bold" fill="#3048c0">RSI</text>,
  <text x="3" y="14" fontSize="16" fontWeight="bold" fill="#c83040">$</text>,
  <path d="M8 0l3 3H5zM8 16l3-3H5zM0 8l3-3v6zM16 8l-3-3v6zM7 4h2v3h3v2H9v3H7V9H4V7h3z" fill="#1858b0" stroke="#1858b0" />,
  <path d="M2 14l1-4l8-8q2-1 3 1t-1 3l-8 7z" fill="#d89048" stroke="#704018" />,
  null,
  <Box><text x="2" y="12" fontSize="11" fill="#103c90">F5</text></Box>,
  <Box>
    <path d="M3 8q0-5 6-4l1-2l3 4l-5 1l1-2q-3 0-4 3z" fill="#58b840" />
    <path d="M13 8q0 5-6 4l-1 2l-2-4l5-1l-1 2q3 0 3-3z" fill="#58b840" />
  </Box>,
];

const stripWords = ["1", "5", "15", "30", "60", "日", "周", "月", "N", "多", "季", "年"];

const N = "#000090";
const K = "#101010";
const ln = (d, stroke = N) => <path d={d} fill="none" stroke={stroke} />;
const dots = (...pts) => pts.map(([x, y]) => <rect key={x + "," + y} x={x - 1} y={y - 1} width="3" height="3" fill={K} />);
const word = (t) => <text x="0" y="9" fontSize="9" fill={N}>{t}</text>;
const tools = [
  ["选择", <path d="M5 1v12l3-3l2 5l2-1l-2-5h4z" fill="#fff" stroke={K} />],
  ["线段", <>{ln("M3 13L13 3")}{dots([2, 13], [13, 2])}</>],
  ["直线", <>{ln("M2 14L15 1")}{dots([5, 10], [11, 4])}</>],
  ["箭头", <>{ln("M3 13L13 3M8 3h5v5")}{dots([2, 13])}</>],
  ["射线", <>{ln("M0 15L15 1")}{dots([5, 10], [12, 3])}</>],
  ["水平线", <>{ln("M1 8.5h14", K)}{dots([8, 8])}</>],
  ["水平射线", <>{ln("M1 8.5h14", K)}{dots([2, 8])}</>],
  ["水平线段", <>{ln("M1 8.5h14", K)}{dots([2, 8], [13, 8])}</>],
  ["垂直线", <>{ln("M8.5 2v13", K)}{dots([8, 8])}</>],
  ["标价", <>{ln("M1.5 3v11h14")}{dots([2, 14])}<text x="3" y="11" fontSize="7" fill={N}>123</text></>],
  ["平行线", <>{ln("M0 11L10 1M0 15L14 2M6 15L15 7")}{dots([4, 7], [11, 5])}</>],
  ["等距线", <>{ln("M0 12L11 1M3 14L15 2")}{dots([5, 7], [10, 7])}</>],
  ["双线", <>{ln("M1 9L9 2M4 14L15 4")}{dots([2, 8], [6, 12])}</>],
  ["圆弧", ln("M5 2h3q6 1 6 6t-6 6H5")],
  ["圆", <><circle cx="8" cy="8" r="7" fill="none" stroke={K} />{ln("M8 9l4-5", K)}{dots([8, 8])}</>],
  ["外接圆", <><circle cx="8" cy="8" r="7" fill="none" stroke={N} />{ln("M2 5l12 1l-6 8z")}</>],
  ["W底", ln("M1 2l3 12l4-10l3 10l4-12")],
  ["头肩", ln("M1 14l3-6l1 5l3-11l3 11l1-5l3 6")],
  ["上升浪", ln("M1 14l3-4l2 2l4-7l2 2l3-6")],
  ["下降浪", ln("M1 2l4 10l4-6l5 8")],
  ["波浪", ln("M0 14l3-7l2 2l3-8l2 7l2-2l3 6")],
  ["黄金价位", <>{ln("M1 .5h15M1 11.5h15M1 14.5h15")}{word("GP")}</>],
  ["黄金目标", <>{ln("M1 .5h15M1 11.5h15M1 14.5h15")}{word("GA")}</>],
  ["黄金分割", <>{ln("M1 .5h15M1 11.5h15M1 14.5h15")}{word("G")}</>],
  ["百分比", <>{ln("M1 1.5h15M8 5.5h8M8 8.5h8M1 11.5h15M1 14.5h15")}{word("%")}</>],
  ["波段", <>{ln("M1 1.5h15M8 5.5h8M8 8.5h8M1 11.5h15M1 14.5h15")}{word("T")}</>],
  ["线性回归", ln("M1.5 3v13M14.5 0v12M1 7l14-5M1 11l14-5M1 15l14-5", K)],
  ["回归带", ln("M1.5 3v13M12.5 0v12M1 7l15-5M1 11l15-5M1 15l15-5M6 4v9", K)],
  ["通道", ln("M1.5 1v14M14.5 1v14M1 11l14-6", K)],
  ["周期线", ln("M1.5 1v14M6.5 1v14M10.5 1v14M14.5 1v14", K)],
  ["等周期", ln("M2.5 1v14M6.5 1v14M10.5 1v14M14.5 1v14")],
  ["黄金周期", <>{ln("M1.5 1v14M5.5 1v14M14.5 1v14", K)}<text x="7" y="9" fontSize="8" fill={N}>G</text></>],
  ["斐波那契", ln("M1.5 1v14M3.5 1v14M7.5 1v14M11.5 1v14M15.5 1v14", K)],
  ["甘氏周期", ln("M1.5 1v14M5.5 1v14M7 1v14M8.5 1v14M11.5 1v14M15.5 1v14")],
  ["阴历线", ln("M1.5 1v14M5.5 1v14M9.5 1v14M11.5 1v14M14.5 1v14", K)],
  ["阻速线", ln("M1 15L15 1M1 15L15 6M1 15L15 10", K)],
  ["甘氏线", ln("M1.5 1v14H16M2 14L6 1M2 14L14 2M2 14L15 7M2 14L15 11")],
  ["对称", ln("M1 5l7 8l7-8M8 1v12", K)],
  ["三角形", ln("M1 4l14-2l-7 12z")],
  ["矩形", <rect x="1.5" y="3.5" width="13" height="10" fill="none" stroke={N} />],
  ["涨标记", <path d="M8 2l4 5H9v6H7V7H4z" fill="#d81010" />],
  ["跌标记", <path d="M8 14l4-5H9V3H7v6H4z" fill="#108020" />],
  ["趋势标记", <>{ln("M1 14L12 2", K)}<path d="M12 7l4 5h-3v3h-2v-3H8z" fill="#d81010" /></>],
  ["文字", <text x="3" y="13" fontSize="13" fontWeight="bold" fill={K}>A</text>],
  ["注释", <><text x="5" y="14" fontSize="13" fontWeight="bold" fill={K}>A</text>{ln("M0 4h5M2.5 1v6", K)}</>],
  ["隐藏", <><rect x="1.5" y="2.5" width="13" height="12" fill="#f0f0f0" stroke="#808080" /><rect x="4" y="5" width="8" height="7" fill="#909090" /></>],
  ["删除", <path d="M3 3l11 11M14 3L3 14" stroke="#d81818" strokeWidth="2" />],
  ["设置", <><rect x="1.5" y="7.5" width="5" height="7" fill="#fff" stroke="#909090" /><circle cx="12" cy="4" r="3" fill="#f0e020" stroke="#b0a020" />{ln("M3 1l12 13", "#909090")}</>],
  ["列表", <><rect x="1.5" y="1.5" width="13" height="14" fill="#fff" stroke={K} />{ln("M4 4.5h8M4 7.5h8M4 10.5h8M4 13.5h8")}</>],
  ["尺子", <><rect x="1.5" y="4.5" width="13" height="8" fill="#fff" stroke={N} />{ln("M4.5 5v3M7.5 5v3M10.5 5v3M13 5v3", K)}</>],
  ["图片", <><rect x="2.5" y="3.5" width="12" height="10" fill="#fff" stroke={K} /><path d="M4 6h4v5H4z" fill="#108868" />{ln("M10 6h3M10 9h3", "#108868")}</>],
  null,
  ["上", "上", "#c81818"],
  ["下", "下", "#108020"],
  ["涨跌", <><path d="M8 1l4 5H4z" fill="#d81010" /><path d="M5 7h6v3H5z" fill="#e8d020" /><path d="M8 16l4-5H4z" fill="#108020" /></>],
  null,
  ["买", "买", "#a0a0a0", 12],
  ["卖", "卖", "#a0a0a0", 12],
  ["平", "平", "#a0a0a0", 12],
];

function DrawingTools() {
  const [open, setOpen] = useState(true);
  if (!open) return null;
  return (
    <Palette aria-label="画线工具">
      <PaletteHead>
        <PaletteClose aria-label="关闭" onClick={() => setOpen(false)} />
      </PaletteHead>
      <PaletteGrid>
        {tools.map((tool, i) => {
          if (!tool) return <span key={i} />;
          const [name, icon, color, size] = tool;
          return (
            <PaletteButton key={i} aria-label={name} $color={color} $size={size}>
              {typeof icon === "string" ? icon : <svg width="16" height="16">{icon}</svg>}
            </PaletteButton>
          );
        })}
      </PaletteGrid>
    </Palette>
  );
}

/* ---------- page data ---------- */

const navItems = ["行情", "交易", "资讯", "金融超市", "网上营业厅", "积分商城", "迷你首页"];
const tradeGroups = [
  [["交易下单", "order"], ["闪电买入", "buy"], ["闪电卖出", "sell"]],
  [["预警委托", "alert"]],
  [["组合通", "combo"], ["多账户", "accounts"], ["融资融券", "margin"]],
];
const periods = ["分时", "1分钟", "5分钟", "15分钟", "30分钟", "60分钟", "日线", "周线", "月线", "更多", ">"];
const chartActions = ["复权", "叠加", "画线", "F10", "标记", "+自选", "返回"];
const indicatorTabs = ["指标", "模板", "全部", "110长短", "四季控盘长线2", "波段王3", "横空操盘线", "四季操盘短线", "MACD共振30", "大满贯波段监", "中期趋势", "月月红", "季季红", "CCIANDMACD", "MACD超前111", "主升上车主图", "真实筹码主图", "主力追踪", "主力控盘", "资金流动", "百战百战", "主力吸筹", "BBBBBB", "卖股找我附图", "不知道名字", "主图波段买点", ">"];

const G = "#38d848";
const R = "#e84048";
const Y = "#c8c048";
const asks = [["卖五", "9.79", "136"], ["卖四", "9.78", "98"], ["卖三", "9.77", "19"], ["卖二", "9.76", "666"], ["卖一", "9.75", "2319"]];
const bids = [["买一", "9.74", "670"], ["买二", "9.73", "247"], ["买三", "9.72", "268"], ["买四", "9.71", "293"], ["买五", "9.70", "1223"]];
const stats = [
  ["现价", "9.75", G, "今开", "9.83", "#fff"],
  ["涨跌", "-0.08", G, "最高", "9.88", R],
  ["涨幅", "-0.81%", G, "最低", "9.75", G],
  ["总量", "151023", Y, "量比", "1.06", R],
  ["外盘", "79100", R, "内盘", "71923", G],
];
const shares = [
  ["换手", "2.11%", null, "股本", "17.7亿"],
  ["净资", "4.91", null, "流通", "7.17亿"],
  ["", "199", null, "PE[动]", "24.4"],
];
const flowRows = [["774.7万", "5%"], ["1194万", "8%"]];
const ticks = [
  ["", ".77", 66, "B", 2], ["", ".77", 4, "S", 1], ["", ".77", 123, "S", 3], ["", ".77", 220, "S", 5],
  ["", ".77", 30, "S", 2], ["", ".78", 153, "B", 8], ["", ".78", 26, "B", 4], ["", ".77", 126, "S", 4],
  ["", ".77", 47, "B", 8], ["", ".77", 5, "B", 1], ["", ".77", 144, "B", 5], ["", ".77", 87, "B", 6],
  ["", ".77", 19, "S", 4], ["", ".77", 39, "S", 3], ["", ".77", 1, "S", 1], ["", ".77", 70, "S", 3],
  ["14:56", "9.78", 179, "B", 8], ["14:56", "9.77", 13, "S", 2], ["14:56", "9.77", 425, "S", 8],
  ["14:56", "9.78", 4, "B", 2], ["14:56", "9.77", 196, "S", 14], ["14:56", "9.77", 25, "B", 3],
  ["14:57", "9.78", 537, "", 9], ["15:00", "9.75", 18626, "", 296],
];
const quoteTabs = ["笔", "价", "细", "势", "联", "值", "主", "筹"];
const indices = [
  ["上证", "3388.25", "7.55", "0.22%", "1786"],
  ["深证", "11339.1", "32.82", "0.29%", "2286"],
  ["中小", "7815.38", "17.80", "0.23%", "991.6"],
  ["沪深", "3959.40", "28.60", "0.73%", "1202"],
  ["创业", "1901.69", "2.93", "0.15%", "649.0"],
];

// latin runs are set in a narrow fixed pitch beside the Chinese
function Mixed({ text }) {
  return text.split(/([A-Z]+|[0-9]+)/).map((part, i) => {
    if (i % 2 === 0) return part;
    const Run = /[0-9]/.test(part) ? Digits : Letters;
    return <Run key={i}>{part}</Run>;
  });
}

function withUnit(text) {
  const unit = /[亿万]$/.test(text);
  return unit ? <>{text.slice(0, -1)}<span>{text.slice(-1)}</span></> : text;
}

function BookTable({ rows }) {
  return (
    <QuoteTable>
      <tbody>
        {rows.map(([name, price, volume]) => (
          <tr key={name}>
            <th scope="row">{name}</th>
            <Num $color={G}>{price}</Num>
            <Num $color={Y}>{volume}</Num>
          </tr>
        ))}
      </tbody>
    </QuoteTable>
  );
}

function PairTable({ rows }) {
  return (
    <QuoteTable>
      <tbody>
        {rows.map(([a, av, ac, b, bv, bc]) => (
          <tr key={b}>
            <th scope="row">{a}</th>
            <Num $color={ac}>{av}</Num>
            <th scope="row">{b}</th>
            <Num $color={bc}>{withUnit(bv)}</Num>
          </tr>
        ))}
      </tbody>
    </QuoteTable>
  );
}

function QuotePanel() {
  const [tab, setTab] = useState("笔");
  return (
    <Quote>
      <QuoteTitle>002807 <span>江阴银行</span></QuoteTitle>
      <QuoteBlock><PairTable rows={[["委比", "-9.04%", G, "委差", "-537", G]]} /></QuoteBlock>
      <QuoteBlock $pad={1}><BookTable rows={asks} /></QuoteBlock>
      <QuoteBlock $pad={1}><BookTable rows={bids} /></QuoteBlock>
      <QuoteBlock $pad={1}><PairTable rows={stats} /></QuoteBlock>
      <QuoteBlock $pad={2}><PairTable rows={shares} /></QuoteBlock>
      <QuoteBlock>
        <FlowTable>
          <tbody>
            {flowRows.map(([amount, share]) => (
              <tr key={amount}>
                <Num $color={R}>{withUnit(amount)}</Num>
                <Num $color={R}>{share}</Num>
              </tr>
            ))}
          </tbody>
        </FlowTable>
      </QuoteBlock>
      <Ticks>
        <tbody>
          {ticks.map(([time, price, volume, side, count], i) => (
            <tr key={i}>
              <TickTime>{time}</TickTime>
              <TickCell $width={64} $color="#28e038">{price}</TickCell>
              <TickCell $width={63} $color={side ? Y : "#b030b8"}>{volume}</TickCell>
              <TickCell $width={21} $color={side === "B" ? "#d04040" : "#30a848"}>{side}</TickCell>
              <TickCount>{count}</TickCount>
            </tr>
          ))}
        </tbody>
      </Ticks>
      <QuoteTabs>
        {quoteTabs.map((t) => (
          <QuoteTab key={t} $active={t === tab} onClick={() => setTab(t)}>{t}</QuoteTab>
        ))}
      </QuoteTabs>
    </Quote>
  );
}

function TrayIcons() {
  return (
    <Tray>
      <svg width="15" height="14"><rect x=".5" y="1.5" width="14" height="11" fill="#fffbe8" stroke="#8098a8" /><path d="M5 9h7" stroke="#e0a830" strokeWidth="2" /></svg>
      <svg width="15" height="14"><rect x=".5" y="1.5" width="14" height="11" fill="#fff" stroke="#8098a8" /><path d="M2 4.5h11M2 7.5h11M2 10.5h11" stroke="#b8c0c8" /></svg>
      <svg width="15" height="14"><rect x="1.5" y="1.5" width="12" height="12" rx="4" fill="#e8d030" stroke="#b09818" /><path d="M7.5 3l3 4h-2v4h-2V7h-2z" fill="#807010" /></svg>
      <svg width="15" height="16"><path d="M7 5v5M4 15l3-6l3 6zM4 2q-2 3 0 6M11 2q2 3 0 6M2 0q-3 5 0 10M13 0q2 5 0 10" fill="none" stroke="#687888" /></svg>
      <svg width="15" height="14"><path d="M8 0l4 5H4z" fill="#d01818" /><path d="M5 6h6v2H5z" fill="#e8d020" /><path d="M8 14l4-5H4z" fill="#108028" /></svg>
      <svg width="6" height="14"><path d="M3 2v7M3 11v2" stroke="#607888" strokeWidth="2" strokeDasharray="3 1" /></svg>
    </Tray>
  );
}

export default function App() {
  const [period, setPeriod] = useState("日线");
  const [indicator, setIndicator] = useState("全部");

  return (
    <Page>
      <GlobalStyle />
      <TitleBar>
        <Brand>
          <BrandMark />
          <BrandName>广发证券</BrandName>
          <BrandSub>金融终端</BrandSub>
        </Brand>
        <HistoryButtons>
          {Object.entries(historyIcons).map(([name, icon]) => (
            <button key={name} aria-label={name}>
              <svg width="18" height="18">{icon}</svg>
            </button>
          ))}
        </HistoryButtons>
        <Nav>
          {navItems.map((item) => (
            <NavLink key={item} href="#" $active={item === "交易"}>{item}</NavLink>
          ))}
        </Nav>
        <AccountButtons>
          <AccountButton>我要开户</AccountButton>
          <AccountButton>广发必读</AccountButton>
        </AccountButtons>
      </TitleBar>

      <TradeBar>
        {tradeGroups.map((group, i) => (
          <TradeGroup key={i}>
            {group.map(([name, icon]) => (
              <TradeButton key={name} $active={icon === "order"}>
                <TradeIcon name={icon} />
                {name}
              </TradeButton>
            ))}
          </TradeGroup>
        ))}
      </TradeBar>

      <Work>
        <Main>
          <Desk>
            <Charts>
              <PeriodBar>
                <Periods>
                  {periods.map((p) => (
                    <Period key={p} $active={p === period} onClick={() => setPeriod(p)}>{p}</Period>
                  ))}
                </Periods>
                <ChartActions>
                  {chartActions.map((a) => (
                    <ChartAction key={a}><Mixed text={a} /></ChartAction>
                  ))}
                </ChartActions>
              </PeriodBar>

              <Pane>
                <Plot>
                  <Legend>
                    <span>江阴银行(日线.前复权)</span>
                    <svg width="12" height="12"><path d="M6 0l5 5H8v6H4V5H1z" fill="#f00808" /></svg>
                    <span>主升上车主图</span>
                    <LegendValue $color="#f0f0f0">MA1: 9.77</LegendValue>
                    <LegendValue $color="#e8e860">MA2: 9.90</LegendValue>
                    <LegendValue $color="#b830b8">MA3: 10.02</LegendValue>
                    <LegendValue $color="#38c848">MA4: 11.04</LegendValue>
                    <LegendEnd>
                      <svg width="12" height="12"><path d="M6 1l5 5l-5 5l-5-5z" fill="none" stroke={RED} /></svg>
                      <svg width="12" height="12"><path d="M1.5 .5h9v11h-9zM6.5 0v12" fill="none" stroke={RED} /></svg>
                    </LegendEnd>
                  </Legend>
                  <UpperPlot />
                </Plot>
                <Axis top={113} height={226} scale={upperScale} />
              </Pane>

              <Pane>
                <Plot>
                  <Legend>
                    <span>天下无敌源码</span>
                    <LegendValue $color="#0000b8" $before={10}>ZK1: 10.35</LegendValue>
                    <LegendValue $color="#d02828">ZD1: 9.72</LegendValue>
                    <LegendValue $color="#c8c8c8">ZD2: 10.05</LegendValue>
                    <LegendValue $color="#b830b8" $before={110}>买阴线1: 0.00</LegendValue>
                    <LegendValue $color="#30c040" $before={4}>买阴线2: 0.00</LegendValue>
                  </Legend>
                  <LowerPlot />
                </Plot>
                <Axis top={340} height={602} scale={lowerScale}>
                  <rect x="1621" y="672" width="49" height="17" fill="#000090" />
                  <text x="1621" y="685" fill="#c8c8e8">10.19</text>
                </Axis>
              </Pane>

              <FootRow $height={16}>
                <FootFill><DateAxis /></FootFill>
                <FootEnd><button>日线</button></FootEnd>
              </FootRow>
              <FootRow $height={17}>
                <FootFill>
                  {indicatorTabs.map((t, i) => (
                    <Tab key={t} $tight={i < 3} $active={t === indicator} onClick={() => setIndicator(t)}>
                      <Mixed text={t} />
                    </Tab>
                  ))}
                </FootFill>
                <FootEnd><button>+</button><button>−</button><button>0</button></FootEnd>
              </FootRow>
              <FootRow $height={18}>
                <FootFill>
                  <Tab>扩展∧</Tab>
                  <Tab>关联报价</Tab>
                </FootFill>
                <FootEnd><button><Mixed text="图文F10" /></button></FootEnd>
              </FootRow>
            </Charts>
            <QuotePanel />
          </Desk>

          <News>
            <a href="#">*为人类作出新的更大的贡献一一十九大的世界意义</a>
            <a href="#">美联储新主席渐行渐近 有必要将眼光放长远一些</a>
          </News>

          <Status>
            <svg width="16" height="16"><rect x="0" y="1" width="15" height="14" fill="#f0b030" /><path d="M3 7h5v5H3zM6 4h6v5" fill="none" stroke="#fff" strokeWidth="2" /></svg>
            {indices.map(([name, value, change, percent, amount]) => (
              <Index key={name}>
                <IndexName>{name}</IndexName>
                <Up>{value}</Up>
                <Up>{change}</Up>
                <Up>{percent}</Up>
                <Amount>{amount}<span>亿</span></Amount>
              </Index>
            ))}
            <Turnover>
              <IndexName>总成交</IndexName>
              <Amount>4072<span>亿</span></Amount>
            </Turnover>
            <TerminalName>广发证券金融终端</TerminalName>
            <TrayIcons />
          </Status>
        </Main>

        <Strip>
          {stripIcons.map((icon, i) =>
            icon ? (
              <StripButton key={i} aria-label={`工具${i + 1}`} $pressed={i === 19}>
                <svg width="16" height="16" overflow="visible">{icon}</svg>
              </StripButton>
            ) : (
              <StripRule key={i} />
            )
          )}
          {stripWords.map((w) => (
            <StripButton key={w} $pressed={w === "日"}>{w}</StripButton>
          ))}
        </Strip>
      </Work>

      <Watermark>
        <WatermarkTop>
          <strong>股海网</strong>
          <span>股票软件资源分享</span>
        </WatermarkTop>
        <WatermarkUrl href="#">Www.Guhai.com.cn</WatermarkUrl>
      </Watermark>
      <DrawingTools />
      <Meter><MeterLevel /></Meter>
    </Page>
  );
}
